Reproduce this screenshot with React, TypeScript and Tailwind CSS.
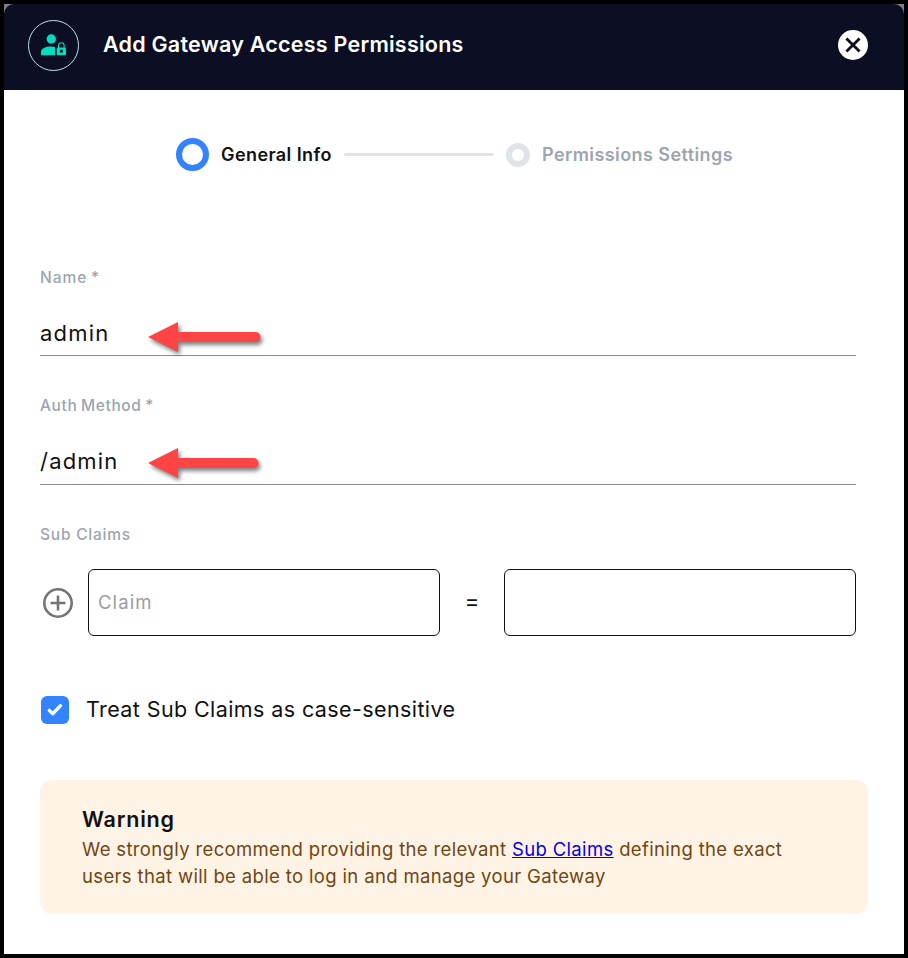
import React from "react";

type FieldProps = {
  label: string;
  labelClass: string;
  value: string;
  boxClass: string;
  arrowClass: string;
  shaftEnd: number;
};

function Arrow({ className, shaftEnd }: { className: string; shaftEnd: number }) {
  return (
    <svg className={`absolute ${className}`} width="124" height="44" viewBox="0 0 124 44">
      <g style={{ filter: "drop-shadow(2px 3px 2px rgba(0,0,0,0.5))" }}>
        <path
          d={`M5 19 L35 4 V14 H${shaftEnd - 5} a5 5 0 0 1 0 10 H35 V34 Z`}
          fill="#fe4444"
        />
      </g>
    </svg>
  );
}

function Field({ label, labelClass, value, boxClass, arrowClass, shaftEnd }: FieldProps) {
  return (
    <div>
      <div className={`h-6 pt-px text-[15.5px] leading-6 font-medium whitespace-nowrap text-[#9ca5b0] ${labelClass}`}>{label}</div>
      <div className={`relative w-[816px] border-b border-[#8b8b8b] ${boxClass}`}>
        <span className="block h-8 text-[22px] leading-8 tracking-[1.2px] whitespace-nowrap text-[#111]">{value}</span>
        <Arrow className={arrowClass} shaftEnd={shaftEnd} />
      </div>
    </div>
  );
}

export default function App() {
  return (
    <div className="h-[958px] w-[908px] bg-black p-1 font-['Inter','Noto_Sans',sans-serif]">
      <div className="h-[950px] overflow-hidden bg-[linear-gradient(#808080_0_20px,white_20px)]">
        <header className="flex h-[86px] items-center rounded-t-[10px] bg-[#0c0e24] pr-9 pb-1 pl-6">
          <svg width="51" height="51" viewBox="0 0 51 51">
            <circle cx="25.5" cy="25.5" r="25" fill="none" stroke="#b9e2e6" />
            <g fill="#04dcc0">
              <circle cx="23.3" cy="19" r="4.7" />
              <path d="M13 35.2v-3.4c0-3.3 4.6-5.3 10-5.3 1.6 0 2.9.2 4.1.5v8.2z" />
              <path
                fillRule="evenodd"
                d="M30 27.5h-.1a1.2 1.2 0 0 0-1.2 1.2v5.3a1.2 1.2 0 0 0 1.2 1.2h6.9a1.2 1.2 0 0 0 1.2-1.2v-5.3a1.2 1.2 0 0 0-1.2-1.2h-.1v-1.9a3.35 3.35 0 0 0-6.7 0zm1.1 0v-1.9a2.25 2.25 0 0 1 4.5 0v1.9zm2.3 2.1a1.6 1.6 0 1 1 0 3.2 1.6 1.6 0 0 1 0-3.2z"
              />
            </g>
          </svg>
          <h1 className="ml-6 pb-0.5 text-[21.5px] leading-8 font-semibold tracking-[0.24px] whitespace-nowrap text-white">
            Add Gateway Access Permissions
          </h1>
          <svg className="ml-auto" width="30" height="30" viewBox="0 0 30 30">
            <circle cx="15" cy="15" r="15" fill="white" />
            <path d="M8.4 8.4l13.2 13.2M21.6 8.4L8.4 21.6" stroke="#0c0e24" strokeWidth="2.8" />
          </svg>
        </header>
        <main className="h-[864px] bg-white px-9 pt-12">
          <div className="flex h-[33px] items-center pl-[136px] text-[18px] leading-8 font-semibold tracking-[0.42px] whitespace-nowrap">
            <span className="h-[33px] w-[33px] shrink-0 rounded-full border-6 border-[#3283fd]" />
            <span className="ml-3 w-[111px] text-[#111]">General Info</span>
            <span className="ml-3 h-[3px] w-[150px] shrink-0 rounded-full bg-[#e0e4e8]" />
            <span className="ml-3 h-6 w-6 shrink-0 rounded-full border-6 border-[#e0e4e8]" />
            <span className="ml-3 text-[#9ca5b0]">Permissions Settings</span>
          </div>
          <div className="mt-[94px]">
            <Field
              label="Name *"
              labelClass="tracking-[1px] [word-spacing:-1.6px]"
              value="admin"
              boxClass="h-[67px] pt-[28px]"
              arrowClass="left-[103px] top-[29px]"
              shaftEnd={117.5}
            />
          </div>
          <div className="mt-[37px]">
            <Field
              label="Auth Method *"
              labelClass="tracking-[0.6px] [word-spacing:-1px]"
              value="/admin"
              boxClass="h-[68px] pt-[28px]"
              arrowClass="left-[103px] top-[27px]"
              shaftEnd={115.5}
            />
          </div>
          <div className="mt-[37px] h-6 pt-px text-[15.5px] leading-6 font-medium tracking-[0.78px] whitespace-nowrap text-[#9ca5b0]">
            Sub Claims
          </div>
          <div className="mt-[23px] flex h-[67px] items-center">
            <svg className="ml-[3px]" width="30" height="30" viewBox="0 0 30 30" fill="none" stroke="#757575">
              <circle cx="15" cy="15" r="13.7" strokeWidth="2.6" />
              <path d="M15 7.5v15M7.5 15h15" strokeWidth="2.6" />
            </svg>
            <div className="ml-[15px] flex h-[67px] w-[352px] items-center rounded-[6px] border border-[#111] pb-px pl-[9px] text-[18.5px] leading-7 tracking-[1.1px] text-[#9c9c9c]">
              <span>Claim</span>
            </div>
            <span className="w-16 pb-1 text-center text-[22px] leading-7 text-[#111]">=</span>
            <div className="h-[67px] w-[352px] rounded-[6px] border border-[#111]" />
          </div>
          <div className="mt-[60px] flex h-7 items-center">
            <span className="ml-px flex h-[27.5px] w-7 items-center justify-center rounded-[6px] bg-[#3283fd]">
              <svg width="28" height="28" viewBox="0 0 28 28" fill="none" stroke="white" strokeWidth="3.4" strokeLinecap="round" strokeLinejoin="round">
                <path d="M8.3 14.4l3.6 3.3L19.5 9.7" />
              </svg>
            </span>
            <span className="ml-[17px] pb-0.5 text-[21.5px] leading-7 tracking-[0.4px] whitespace-nowrap text-[#111]">
              Treat Sub Claims as case-sensitive
            </span>
          </div>
          <section className="mt-14 h-[134px] w-[828px] rounded-xl bg-[#fff3e5] pt-[23px] pl-[42px] whitespace-nowrap">
            <h2 className="text-[21.5px] leading-8 font-semibold tracking-[0.8px] text-[#111]">Warning</h2>
            <p className="pt-px text-[18.5px] leading-[27px] tracking-[0.35px] text-[#6f4612]">
              <span className="block">
                We strongly recommend providing the relevant <a className="text-[#0000ee] underline">Sub Claims</a> defining the exact
              </span>
              <span className="block">users that will be able to log in and manage your Gateway</span>
            </p>
          </section>
        </main>
      </div>
    </div>
  );
}
